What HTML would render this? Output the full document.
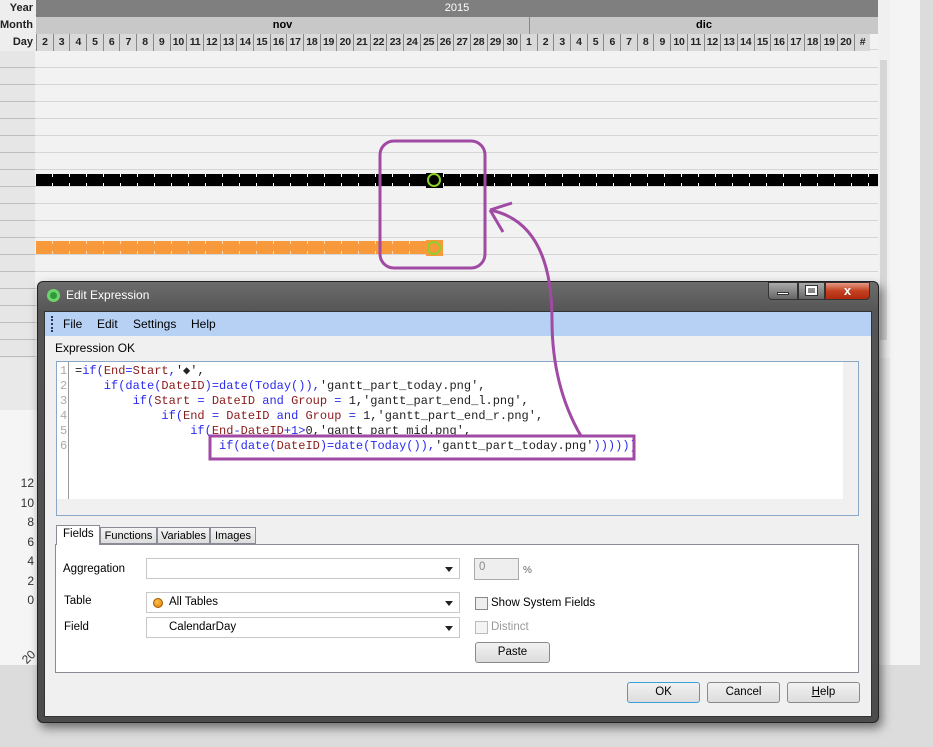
<!DOCTYPE html>
<html><head><meta charset="utf-8"><style>
*{margin:0;padding:0;box-sizing:border-box}
body{width:933px;height:747px;overflow:hidden;background:#dcdcdc;font-family:"Liberation Sans",sans-serif;font-size:11.5px;position:relative}
.abs{position:absolute}
.lbl{position:absolute;left:0;width:35px;text-align:right;font-weight:bold;font-size:11px;color:#222;padding-right:2px;background:#eee}
.days{position:absolute;left:36px;top:34px;height:17px;display:flex;background:#d9d9d9}
.days span{width:16.7px;flex:none;text-align:center;font-weight:bold;font-size:10.5px;line-height:17px;border-left:1px solid #888;color:#222;letter-spacing:-0.3px}
.code{font-family:"Liberation Mono",monospace;font-size:12px;line-height:15px;white-space:pre;color:#2a2af0}
.r{color:#8b1a1a}.s{color:#222}
.btn{position:absolute;height:21px;border:1px solid #8a8a8a;border-radius:3px;background:linear-gradient(#f2f2f2,#dcdcdc);text-align:center;line-height:19px;font-size:11.5px}
.combo{position:absolute;height:21px;background:#fff;border:1px solid #c8c8c8}
.combo::after{content:"";position:absolute;right:6px;top:8px;border:4px solid transparent;border-top:5px solid #222}
</style></head><body>
<div class="abs" style="left:0;top:358px;width:890px;height:307px;background:#e9e9e9"></div>
<div class="abs" style="left:0;top:0;width:878px;height:358px;background:#f2f2f2;background-image:repeating-linear-gradient(to bottom,transparent 0,transparent 16px,#d6d6d6 16px,#d6d6d6 17px);background-position:0 51px"></div>
<div class="abs" style="left:0;top:51px;width:35px;height:307px;background:#e6e6e6;background-image:repeating-linear-gradient(to bottom,transparent 0,transparent 16px,#bdbdbd 16px,#bdbdbd 17px)"></div>
<div class="abs" style="left:36px;top:0;width:842px;height:17px;background:#7f7f7f;color:#fff;text-align:center;font-size:11px;line-height:17px">2015</div>
<div class="abs" style="left:36px;top:17px;width:842px;height:17px;background:#c8c8c8"></div>
<div class="abs" style="left:36px;top:17px;width:493px;height:17px;text-align:center;font-weight:bold;font-size:11px;line-height:17px">nov</div>
<div class="abs" style="left:529px;top:17px;width:349px;height:17px;text-align:center;font-weight:bold;font-size:11px;line-height:17px;border-left:1px solid #888">dic</div>
<div class="lbl" style="top:0;height:17px;line-height:17px">Year</div>
<div class="lbl" style="top:17px;height:17px;line-height:17px">Month</div>
<div class="lbl" style="top:34px;height:17px;line-height:17px">Day</div>
<div class="days"><span>2</span><span>3</span><span>4</span><span>5</span><span>6</span><span>7</span><span>8</span><span>9</span><span>10</span><span>11</span><span>12</span><span>13</span><span>14</span><span>15</span><span>16</span><span>17</span><span>18</span><span>19</span><span>20</span><span>21</span><span>22</span><span>23</span><span>24</span><span>25</span><span>26</span><span>27</span><span>28</span><span>29</span><span>30</span><span>1</span><span>2</span><span>3</span><span>4</span><span>5</span><span>6</span><span>7</span><span>8</span><span>9</span><span>10</span><span>11</span><span>12</span><span>13</span><span>14</span><span>15</span><span>16</span><span>17</span><span>18</span><span>19</span><span>20</span><span>#</span></div>
<!-- bars -->
<div class="abs" style="left:36px;top:174px;width:842px;height:12px;background:#000;background-image:repeating-linear-gradient(to right,transparent 0,transparent 16px,#fff 16px,#fff 17px)"></div>
<div class="abs" style="left:36px;top:177px;width:842px;height:6px;background:#000"></div>
<div class="abs" style="left:426px;top:173px;width:17px;height:15px;background:#000"></div>
<div class="abs" style="left:427px;top:173px;width:14px;height:14px;border:2px solid #8ed02a;border-radius:50%"></div>
<div class="abs" style="left:36px;top:241px;width:407px;height:13px;background:#f89a3c;background-image:repeating-linear-gradient(to right,transparent 0,transparent 16px,#ffd9b0 16px,#ffd9b0 17px)"></div>
<div class="abs" style="left:36px;top:244px;width:407px;height:7px;background:#f89a3c"></div>
<div class="abs" style="left:426px;top:240px;width:17px;height:16px;background:#f89a3c"></div>
<div class="abs" style="left:427px;top:241px;width:14px;height:14px;border:2px solid #8ed02a;border-radius:50%"></div>
<div class="abs" style="left:878px;top:0;width:12px;height:358px;background:#f0f0f0"></div>
<div class="abs" style="left:880px;top:60px;width:7px;height:280px;background:#d6d6d6"></div>
<div class="abs" style="left:890px;top:0;width:30px;height:665px;background:#f4f4f4"></div>
<div class="abs" style="left:0;top:410px;width:40px;height:255px;background:#f5f5f5"></div>
<div class="abs" style="left:10px;top:474px;width:24px;text-align:right;font-size:12px;line-height:19.5px;color:#333">12<br>10<br>8<br>6<br>4<br>2<br>0</div>
<div class="abs" style="left:22px;top:650px;font-size:12px;color:#333;transform:rotate(-45deg)">20</div>
<!-- dialog -->
<div class="abs" style="left:37px;top:281px;width:842px;height:442px;border-radius:6px;background:linear-gradient(#6c6c6c,#555 30px,#4c4c4c);box-shadow:3px 5px 10px rgba(0,0,0,.5);border:1px solid #222"></div>
<div class="abs" style="left:47px;top:289px;width:13px;height:13px;border-radius:50%;background:#2f9a3a;border:3px solid #6ed36a"></div>
<div class="abs" style="left:66px;top:288px;color:#fff;font-size:12px">Edit Expression</div>
<div class="abs" style="left:768px;top:282px;width:30px;height:18px;border:1px solid #333;background:linear-gradient(#aaa,#666);border-radius:0 0 0 4px"></div>
<div class="abs" style="left:777px;top:292px;width:12px;height:3px;background:#fff;border:1px solid #333"></div>
<div class="abs" style="left:798px;top:282px;width:27px;height:18px;border:1px solid #333;background:linear-gradient(#aaa,#666)"></div>
<div class="abs" style="left:806px;top:286px;width:11px;height:9px;border:2px solid #fff;outline:1px solid #333"></div>
<div class="abs" style="left:825px;top:282px;width:45px;height:18px;border:1px solid #333;background:linear-gradient(#e89a88,#c3401f 50%,#b02a10);border-radius:0 0 4px 0;color:#fff;font-weight:bold;text-align:center;line-height:16px;font-size:13px">x</div>
<div class="abs" style="left:44px;top:311px;width:828px;height:406px;background:#f0f0f0;border:1px solid #333"></div>
<div class="abs" style="left:45px;top:312px;width:826px;height:24px;background:#b7d1f4"></div>
<div class="abs" style="left:51px;top:316px;width:2px;height:16px;border-left:2px dotted #335"></div>
<div class="abs" style="left:63px;top:317px;font-size:12px">File</div>
<div class="abs" style="left:97px;top:317px;font-size:12px">Edit</div>
<div class="abs" style="left:133px;top:317px;font-size:12px">Settings</div>
<div class="abs" style="left:191px;top:317px;font-size:12px">Help</div>
<div class="abs" style="left:55px;top:341px;font-size:12px">Expression OK</div>
<div class="abs" style="left:56px;top:361px;width:803px;height:155px;background:#fff;border:1px solid #8aa7c8"></div>
<div class="abs" style="left:57px;top:362px;width:12px;height:137px;border-right:1px solid #999"></div>
<div class="abs" style="left:57px;top:499px;width:801px;height:16px;background:#f0f0f0"></div>
<div class="abs" style="left:843px;top:362px;width:15px;height:137px;background:#f0f0f0"></div>
<div class="abs code" style="left:60px;top:364px;color:#aaa">1
2
3
4
5
6</div>
<div class="abs code" style="left:75px;top:364px"><span class="s">=</span>if(<span class="r">End</span>=<span class="r">Start</span>,<span class="s">'◆',</span>
    if(date(<span class="r">DateID</span>)=date(Today()),<span class="s">'gantt_part_today.png',</span>
        if(<span class="r">Start</span> = <span class="r">DateID</span> and <span class="r">Group</span> = <span class="s">1,'gantt_part_end_l.png',</span>
            if(<span class="r">End</span> = <span class="r">DateID</span> and <span class="r">Group</span> = <span class="s">1,'gantt_part_end_r.png',</span>
                if(<span class="r">End</span>-<span class="r">DateID</span>+1&gt;<span class="s">0,'gantt_part_mid.png',</span>
                    if(date(<span class="r">DateID</span>)=date(Today()),<span class="s">'gantt_part_today.png'</span>))))))</div>
<div class="abs" style="left:55px;top:544px;width:804px;height:129px;background:#fff;border:1px solid #898c95"></div>
<div class="abs" style="left:56px;top:525px;width:44px;height:20px;background:#fff;border:1px solid #898c95;border-bottom:none;padding:2px 0 0 6px">Fields</div>
<div class="abs" style="left:100px;top:527px;width:57px;height:17px;background:linear-gradient(#f4f4f4,#ddd);border:1px solid #898c95;font-size:11px;text-align:center;line-height:16px">Functions</div>
<div class="abs" style="left:157px;top:527px;width:53px;height:17px;background:linear-gradient(#f4f4f4,#ddd);border:1px solid #898c95;font-size:11px;text-align:center;line-height:16px">Variables</div>
<div class="abs" style="left:210px;top:527px;width:46px;height:17px;background:linear-gradient(#f4f4f4,#ddd);border:1px solid #898c95;font-size:11px;text-align:center;line-height:16px">Images</div>
<div class="abs" style="left:63px;top:563px">Aggregation</div>
<div class="abs" style="left:64px;top:595px">Table</div>
<div class="abs" style="left:64px;top:621px">Field</div>
<div class="combo" style="left:146px;top:558px;width:314px"></div>
<div class="combo" style="left:146px;top:592px;width:314px"></div>
<div class="abs" style="left:153px;top:598px;width:10px;height:10px;border-radius:50%;background:radial-gradient(circle at 40% 35%,#ffc24a,#e07a00);border:1px solid #a05a00"></div>
<div class="abs" style="left:169px;top:596px">All Tables</div>
<div class="combo" style="left:146px;top:617px;width:314px"></div>
<div class="abs" style="left:169px;top:621px">CalendarDay</div>
<div class="abs" style="left:474px;top:558px;width:45px;height:22px;background:#eee;border:1px solid #aaa;color:#888;padding:2px 4px">0</div>
<div class="abs" style="left:523px;top:565px;font-size:10px;color:#666">%</div>
<div class="abs" style="left:475px;top:597px;width:13px;height:13px;border:1px solid #888;background:#eee"></div>
<div class="abs" style="left:491px;top:597px">Show System Fields</div>
<div class="abs" style="left:475px;top:621px;width:13px;height:13px;border:1px solid #bbb;background:#f4f4f4"></div>
<div class="abs" style="left:491px;top:621px;color:#999">Distinct</div>
<div class="btn" style="left:475px;top:642px;width:75px">Paste</div>
<div class="btn" style="left:627px;top:682px;width:73px;border-color:#3c9fd8">OK</div>
<div class="btn" style="left:707px;top:682px;width:73px">Cancel</div>
<div class="btn" style="left:787px;top:682px;width:73px"><u>H</u>elp</div>
<svg class="abs" style="left:0;top:0" width="933" height="747">
<g fill="none" stroke="#a04aa4" stroke-width="3">
<rect x="380" y="141" width="105" height="127" rx="14"/>
<rect x="210" y="436" width="424" height="23"/>
<path d="M581 436 C560 400 552 360 552 320 C552 270 540 220 490 210"/>
<path d="M490 210 L512 203 M490 210 L503 232"/>
</g></svg>
</body></html>
